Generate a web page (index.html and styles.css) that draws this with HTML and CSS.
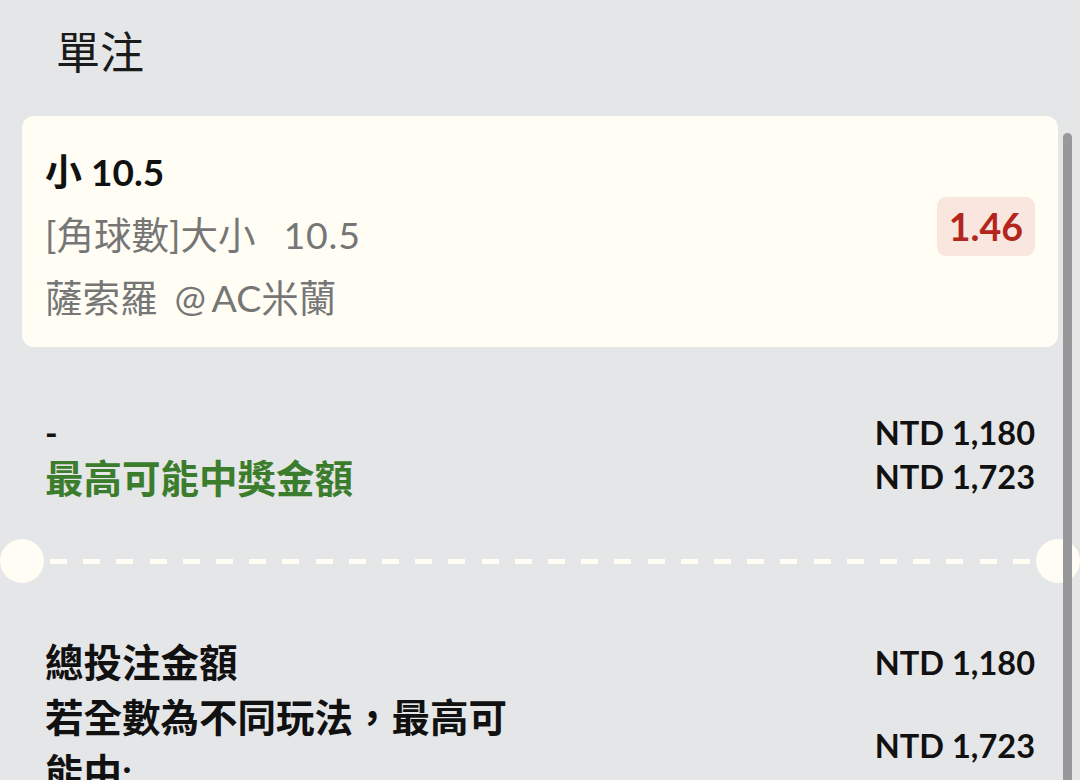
FILE: index.html
```html
<!DOCTYPE html>
<html lang="zh-Hant">
<head>
<meta charset="utf-8">
<title>單注</title>
<link rel="stylesheet" href="styles.css">
</head>
<body>
<div class="page">
  <h1 class="title">單注</h1>

  <div class="card">
    <div class="card-info">
      <div class="sel">小 10.5</div>
      <div class="market">[角球數]大小<span class="hcp">10.5</span></div>
      <div class="match">薩索羅 <span class="at">@</span>AC米蘭</div>
    </div>
    <div class="odds">1.46</div>
  </div>

  <div class="summary">
    <div class="row">
      <div class="label dash">-</div>
      <div class="amount">NTD 1,180</div>
    </div>
    <div class="row">
      <div class="label win">最高可能中獎金額</div>
      <div class="amount">NTD 1,723</div>
    </div>
  </div>
</div>

<div class="divider">
  <span class="notch"></span>
  <span class="dashes"></span>
  <span class="notch"></span>
</div>

<div class="page">
  <div class="totals">
    <div class="trow">
      <div class="tlabel">總投注金額</div>
      <div class="amount">NTD 1,180</div>
    </div>
    <div class="trow">
      <div class="tlabel">若全數為不同玩法，最高可能中:</div>
      <div class="amount">NTD 1,723</div>
    </div>
  </div>
</div>

<div class="scrollbar"></div>
</body>
</html>
```

FILE: styles.css
```css
html, body {
  margin: 0;
  padding: 0;
}
body {
  width: 1080px;
  height: 780px;
  overflow: hidden;
  position: relative;
  background: #e5e6e8;
  font-family: Lato, "Noto Sans CJK TC", sans-serif;
  color: #111;
}
.page {
  padding: 0 22px;
}
.title {
  margin: 0;
  padding: 26px 0 0 34px;
  font-size: 44px;
  line-height: 52px;
  font-weight: 400;
  color: #1a1a1a;
}
.card {
  margin-top: 38px;
  background: #fffdf4;
  border-radius: 12px;
  padding: 24px 23px 18px 23px;
  display: flex;
  align-items: center;
  justify-content: space-between;
}
.card-info {
  display: flex;
  flex-direction: column;
}
.sel {
  font-size: 37px;
  line-height: 63px;
  font-weight: 700;
  color: #111;
}
.market, .match {
  font-size: 37.5px;
  line-height: 63px;
  color: #767676;
}
.hcp {
  margin-left: 0.75em;
  letter-spacing: 0.02em;
}
.at {
  margin: 0 0.15em 0 0.2em;
}
.odds {
  margin-bottom: 16px;
  height: 59px;
  padding: 0 12px 0 12px;
  display: flex;
  align-items: center;
  background: #f9e7df;
  border-radius: 9px;
  color: #b3261e;
  font-size: 37.5px;
  font-weight: 700;
}
.summary {
  margin-top: 63px;
  padding: 0 23px;
}
.row {
  display: flex;
  justify-content: space-between;
  align-items: center;
  height: 44px;
}
.label {
  font-weight: 700;
}
.dash {
  font-size: 34px;
  color: #111;
}
.win {
  font-size: 38.5px;
  color: #3b7d2c;
}
.amount {
  font-size: 32.5px;
  font-weight: 700;
  color: #111;
  white-space: nowrap;
}
.divider {
  margin-top: 41px;
  display: flex;
  align-items: center;
  gap: 6px;
}
.notch {
  flex: 0 0 44px;
  height: 44px;
  border-radius: 50%;
  background: #fffdf4;
}
.dashes {
  flex: 1 1 auto;
  height: 5px;
  background: repeating-linear-gradient(to right, #fffdf4 0 17px, transparent 17px 33.2px);
}
.totals {
  margin-top: 52px;
  padding: 0 23px;
}
.trow {
  display: flex;
  justify-content: space-between;
  align-items: center;
}
.tlabel {
  max-width: 478px;
  font-size: 38.5px;
  line-height: 55px;
  font-weight: 700;
  color: #111;
}
.scrollbar {
  position: absolute;
  top: 133px;
  bottom: 0;
  right: 8px;
  width: 9px;
  background: #98989b;
  border-radius: 5px 5px 0 0;
}
```
